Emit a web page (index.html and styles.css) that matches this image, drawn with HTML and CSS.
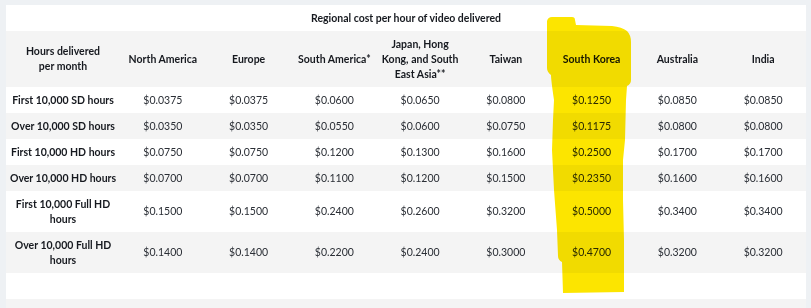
FILE: index.html
```html
<!DOCTYPE html>
<html>
<head>
<meta charset="utf-8">
<link rel="stylesheet" href="styles.css">
</head>
<body>
<div class="panel">
  <table class="pricing">
    <colgroup>
      <col class="c-label">
      <col span="8" class="c-region">
    </colgroup>
    <tr class="title-row"><th colspan="9">Regional cost per hour of video delivered</th></tr>
    <tr class="head-row">
      <th>Hours delivered<br>per month</th>
      <th>North America</th>
      <th>Europe</th>
      <th>South America*</th>
      <th>Japan, Hong Kong, and South East Asia**</th>
      <th>Taiwan</th>
      <th>South Korea</th>
      <th>Australia</th>
      <th>India</th>
    </tr>
    <tr class="r-white">
      <th class="lbl">First 10,000 SD hours</th>
      <td>$0.0375</td><td>$0.0375</td><td>$0.0600</td><td>$0.0650</td><td>$0.0800</td><td>$0.1250</td><td>$0.0850</td><td>$0.0850</td>
    </tr>
    <tr class="r-gray">
      <th class="lbl">Over 10,000 SD hours</th>
      <td>$0.0350</td><td>$0.0350</td><td>$0.0550</td><td>$0.0600</td><td>$0.0750</td><td>$0.1175</td><td>$0.0800</td><td>$0.0800</td>
    </tr>
    <tr class="r-white">
      <th class="lbl">First 10,000 HD hours</th>
      <td>$0.0750</td><td>$0.0750</td><td>$0.1200</td><td>$0.1300</td><td>$0.1600</td><td>$0.2500</td><td>$0.1700</td><td>$0.1700</td>
    </tr>
    <tr class="r-gray">
      <th class="lbl">Over 10,000 HD hours</th>
      <td>$0.0700</td><td>$0.0700</td><td>$0.1100</td><td>$0.1200</td><td>$0.1500</td><td>$0.2350</td><td>$0.1600</td><td>$0.1600</td>
    </tr>
    <tr class="r-white">
      <th class="lbl wrap">First 10,000 Full HD hours</th>
      <td>$0.1500</td><td>$0.1500</td><td>$0.2400</td><td>$0.2600</td><td>$0.3200</td><td>$0.5000</td><td>$0.3400</td><td>$0.3400</td>
    </tr>
    <tr class="r-gray">
      <th class="lbl wrap">Over 10,000 Full HD hours</th>
      <td>$0.1400</td><td>$0.1400</td><td>$0.2200</td><td>$0.2400</td><td>$0.3000</td><td>$0.4700</td><td>$0.3200</td><td>$0.3200</td>
    </tr>
    <tr class="r-white r-empty"><td colspan="9"></td></tr>
    <tr class="r-gray r-empty"><td colspan="9"></td></tr>
  </table>
</div>
<svg class="marker" width="811" height="308" viewBox="0 0 811 308" aria-hidden="true">
  <path d="M547 21 Q548 17 552 17 L572 17 Q575 17 575 20 L576 25 L612 26 Q622 27 627 31 Q631 35 631 42 L631 80 Q631 84 627 86 L626 100 L625 140 L623 160 L623 200 L624 240 L624 292 L563 293 L562 262 Q558 260 558 256 L557 230 L554 190 L552 150 L553 120 L554 100 Q551 80 551 75 Q547 72 547 68 Z" />
</svg>
</body>
</html>
```

FILE: styles.css
```css
html, body {
  margin: 0;
  padding: 0;
}
body {
  background: #eef1f4;
  font-family: Lato, "Liberation Sans", sans-serif;
  font-size: 10.5px;
  color: #16191f;
  width: 811px;
  height: 308px;
  overflow: hidden;
  position: relative;
}
.panel {
  padding: 5px 5px 0 6px;
}
.pricing {
  width: 800px;
  border-collapse: collapse;
  table-layout: fixed;
}
.c-label { width: 114px; }
.c-region { width: 85.75px; }
.pricing th, .pricing td {
  padding: 5.5px 4px;
  line-height: 15px;
  text-align: center;
  vertical-align: middle;
}
.pricing th {
  font-weight: 700;
  color: #16191f;
}
.pricing td {
  font-weight: 400;
  color: #2a2e35;
}
.pricing .lbl {
  padding-left: 1px;
  padding-right: 1px;
  white-space: nowrap;
}
.pricing .lbl.wrap {
  padding-left: 3px;
  padding-right: 3px;
  white-space: normal;
}
.title-row th {
  background: #ffffff;
  padding: 6px 6px 5px;
}
.head-row th {
  background: #f4f4f4;
  height: 45px;
}
.r-white { background: #ffffff; }
.r-gray { background: #f4f4f4; }
.r-empty td { height: 15px; }
.marker {
  position: absolute;
  left: 0;
  top: 0;
  pointer-events: none;
  mix-blend-mode: multiply;
}
.marker path {
  fill: #fce500;
}
```
